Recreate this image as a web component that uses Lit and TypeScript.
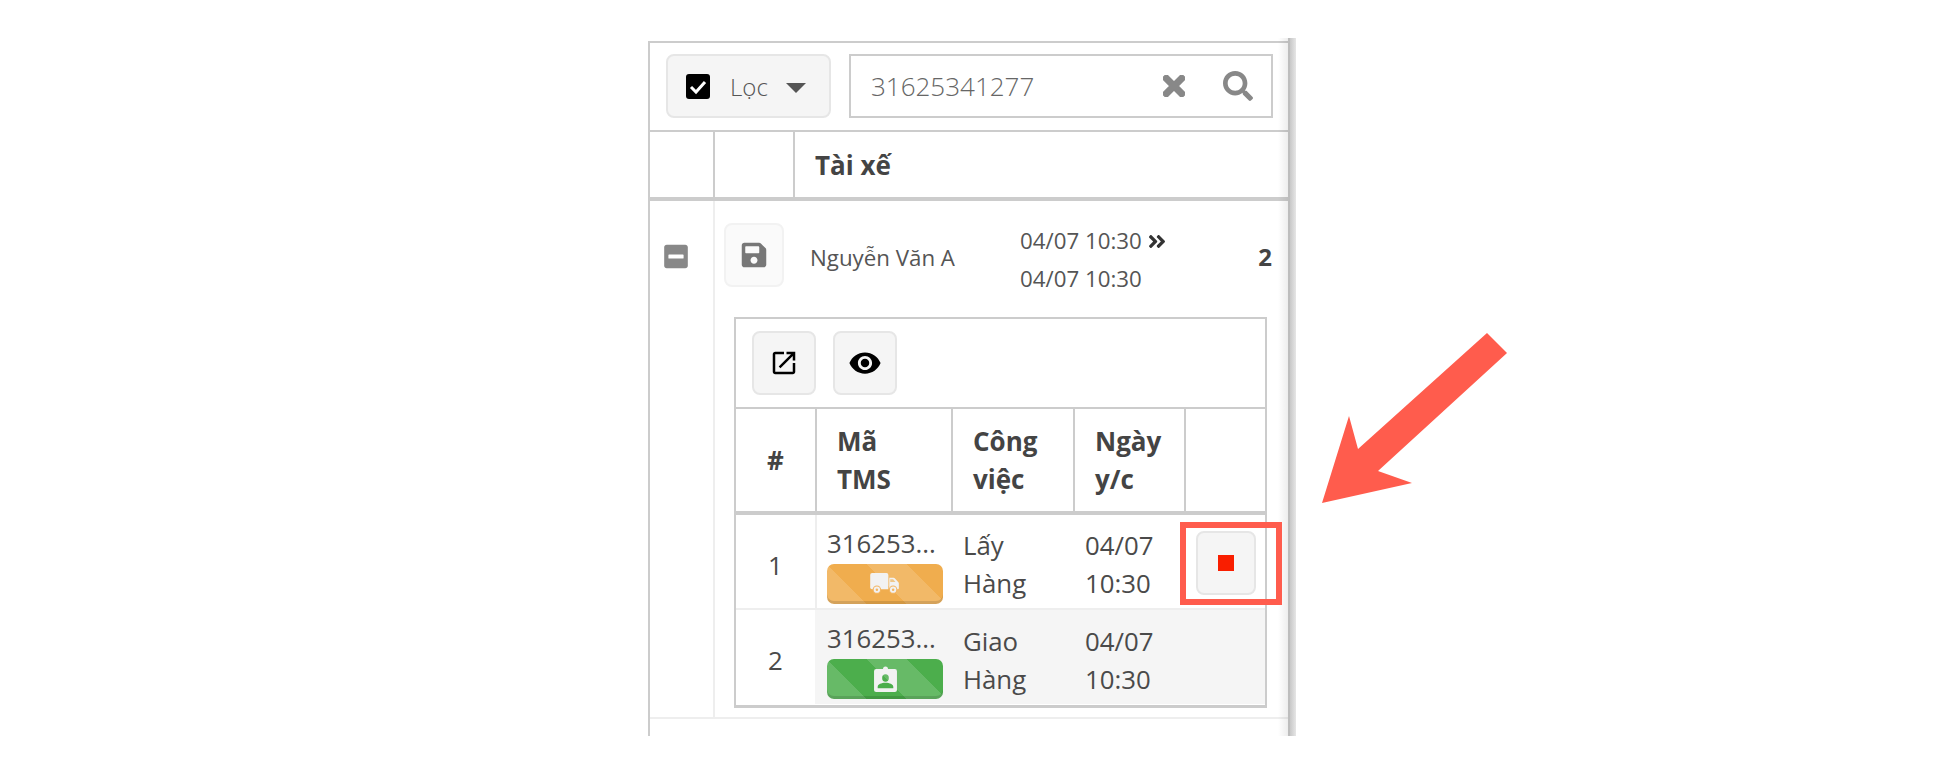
import { LitElement, html, css } from "lit";
import { customElement } from "lit/decorators.js";

const P = {
  times: "M242.72 256l100.07-100.07c12.28-12.28 12.28-32.19 0-44.48l-22.24-22.24c-12.28-12.28-32.19-12.28-44.48 0L176 189.28 75.93 89.21c-12.28-12.28-32.19-12.28-44.48 0L9.21 111.45c-12.28 12.28-12.28 32.19 0 44.48L109.28 256 9.21 356.07c-12.28 12.28-12.28 32.19 0 44.48l22.24 22.24c12.28 12.28 32.2 12.28 44.48 0L176 322.72l100.07 100.07c12.28 12.28 32.2 12.28 44.48 0l22.24-22.24c12.28-12.28 12.28-32.19 0-44.48L242.72 256z",
  search: "M505 442.7L405.3 343c-4.5-4.5-10.6-7-17-7H372c27.6-35.3 44-79.7 44-128C416 93.1 322.9 0 208 0S0 93.1 0 208s93.1 208 208 208c48.3 0 92.7-16.4 128-44v16.3c0 6.4 2.5 12.5 7 17l99.7 99.7c9.4 9.4 24.6 9.4 33.9 0l28.3-28.3c9.4-9.4 9.4-24.6.1-34zM208 336c-70.7 0-128-57.2-128-128 0-70.7 57.2-128 128-128 70.7 0 128 57.2 128 128 0 70.7-57.2 128-128 128z",
  save: "M433.941 129.941l-83.882-83.882A48 48 0 0 0 316.118 32H48C21.49 32 0 53.49 0 80v352c0 26.51 21.49 48 48 48h352c26.51 0 48-21.49 48-48V163.882a48 48 0 0 0-14.059-33.941zM224 416c-35.346 0-64-28.654-64-64 0-35.346 28.654-64 64-64s64 28.654 64 64c0 35.346-28.654 64-64 64zm96-304.52V212c0 6.627-5.373 12-12 12H76c-6.627 0-12-5.373-12-12V108c0-6.627 5.373-12 12-12h228.52c3.183 0 6.235 1.264 8.485 3.515l3.48 3.48A11.996 11.996 0 0 1 320 111.48z",
  minus: "M400 32H48C21.5 32 0 53.5 0 80v352c0 26.5 21.5 48 48 48h352c26.5 0 48-21.5 48-48V80c0-26.5-21.5-48-48-48zM92 296c-6.6 0-12-5.4-12-12v-56c0-6.6 5.4-12 12-12h264c6.6 0 12 5.4 12 12v56c0 6.6-5.4 12-12 12H92z",
  dbl: "M224.3 273l-136 136c-9.4 9.4-24.6 9.4-33.9 0l-22.6-22.6c-9.4-9.4-9.4-24.6 0-33.9l96.4-96.4-96.4-96.4c-9.4-9.4-9.4-24.6 0-33.9L54.3 103c9.4-9.4 24.6-9.4 33.9 0l136 136c9.5 9.4 9.5 24.6.1 34zm192-34l-136-136c-9.4-9.4-24.6-9.4-33.9 0l-22.6 22.6c-9.4 9.4-9.4 24.6 0 33.9l96.4 96.4-96.4 96.4c-9.4 9.4-9.4 24.6 0 33.9l22.6 22.6c9.4 9.4 24.6 9.4 33.9 0l136-136c9.4-9.2 9.4-24.4 0-33.8z",
  eye: "M12 4.5C7 4.5 2.73 7.61 1 12c1.73 4.39 6 7.5 11 7.5s9.27-3.11 11-7.5c-1.73-4.39-6-7.5-11-7.5zM12 17c-2.76 0-5-2.24-5-5s2.24-5 5-5 5 2.24 5 5-2.24 5-5 5zm0-8c-1.66 0-3 1.34-3 3s1.34 3 3 3 3-1.34 3-3-1.34-3-3-3z",
  open: "M19 19H5V5h7V3H5c-1.11 0-2 .9-2 2v14c0 1.1.89 2 2 2h14c1.1 0 2-.9 2-2v-7h-2v7zM14 3v2h3.59l-9.83 9.83 1.41 1.41L19 6.41V10h2V3h-7z",
  idb: "M3 3h6.600a2.400 2.400 0 0 1 4.800 0H21a2 2 0 0 1 2 2v18a2 2 0 0 1-2 2H3a2 2 0 0 1-2-2V5a2 2 0 0 1 2-2zM12 8a3.200 3.600 0 1 0 0 7.200a3.200 3.600 0 1 0 0-7.200zM4.500 21.500h15v-1.400c0-2.400-3.500-3.900-7.500-3.900s-7.500 1.500-7.500 3.900z",
  truckBody: "M2 0h15a2 2 0 0 1 2 2v15H2a2 2 0 0 1-2-2V2a2 2 0 0 1 2-2z",
  truckCab: "M20 5h4.500a1.500 1.500 0 0 1 1.200.6l4 4.400a1.500 1.500 0 0 1 .3 1v5a1 1 0 0 1-1 1h-9z",
};

@customElement("app-root")
export class AppRoot extends LitElement {
  static styles = css`
    :host { display: block; width: 1944px; height: 772px; overflow: hidden; background: #fff; position: relative;
      font-family: "Open Sans", sans-serif; color: #444; }
    .page { padding: 41px 0 0 648px; }
    .panel { width: 642px; height: 695px; box-sizing: border-box; overflow: hidden; border-top: 2px solid #ccc; border-left: 2px solid #ccc; }
    svg { display: block; fill: currentColor; }

    .toolbar { display: flex; gap: 18px; padding: 11px 17px 12px 16px; height: 64px; border-bottom: 2px solid #ccc; box-sizing: content-box; }
    .filter { width: 165px; height: 64px; box-sizing: border-box; display: flex; align-items: center; padding-left: 18px; background: #f5f5f5; border: 2px solid #e6e6e6; border-radius: 8px; font-size: 24px; font-weight: 300; color: #555; }
    .check { width: 24px; height: 25px; margin-right: 20px; color: #000; flex: none; }
    .caret { width: 0; height: 0; margin-left: 18px; margin-top: 3px; border-left: 10px solid transparent; border-right: 10px solid transparent; border-top: 10px solid #555; }
    .search { width: 424px; height: 64px; box-sizing: border-box; display: flex; align-items: center; border: 2px solid #ccc; padding: 0 18px 0 20px; font-size: 26px; color: #666; font-weight: 300; }
    .search .q { flex: 1; }
    .search .x { width: 22px; height: 22px; color: #888; margin-right: 38px; stroke: currentColor; stroke-width: 20; }
    .search .s { width: 30px; height: 30px; color: #888; }

    .head { display: grid; grid-template-columns: 63px 80px 1fr; height: 65px; border-bottom: 4px solid #ccc; font-size: 26px; font-weight: 700; }
    .head > div { border-left: 2px solid #ccc; display: flex; align-items: center; padding-left: 20px; }
    .head > div:first-child { border-left: 0; }

    .row { display: grid; grid-template-columns: 63px 1fr; border-bottom: 2px solid #eee; height: 518px; box-sizing: border-box; }
    .side { padding: 42px 0 0 14px; color: #888; }
    .side svg { width: 24px; height: 27px; }
    .main { border-left: 2px solid #eee; padding: 22px 18px 0 9px; }
    .driver { display: flex; align-items: center; height: 64px; margin-bottom: 30px; }
    .save { width: 60px; height: 64px; flex: none; box-sizing: border-box; background: #fafafa; border: 2px solid #f2f2f2; border-radius: 8px; display: flex; align-items: center; justify-content: center; color: #777; }
    .save svg { width: 26px; height: 28px; }
    .name { font-size: 22.300px; margin: 5px 0 0 26px; width: 210px; color: #555; white-space: nowrap; }
    .dates { font-size: 22.300px; line-height: 38px; margin-top: 10px; color: #555; }
    .dates .d { display: flex; align-items: center; gap: 6px; }
    .dates svg { width: 18px; height: 21px; color: #333; }
    .count { font-size: 24px; font-weight: 700; margin: 2px 0 0 auto; }

    .inner { margin-left: 10px; width: 533px; box-sizing: border-box; border: 2px solid #ccc; border-bottom-width: 3px; height: 391px; }
    .bar { display: flex; gap: 17px; padding: 12px 16px; height: 64px; border-bottom: 2px solid #ccc; box-sizing: content-box; }
    .btn { width: 64px; height: 64px; box-sizing: border-box; background: #f5f5f5; border: 2px solid #e6e6e6; border-radius: 8px; display: flex; align-items: center; justify-content: center; color: #000; }
    .btn .o { width: 30px; height: 30px; }
    .btn .e { width: 34px; height: 34px; }
    .cols { display: grid; grid-template-columns: 79px 136px 122px 111px 1fr; }
    .th { height: 102px; border-bottom: 4px solid #ccc; border-left: 2px solid #ccc; font-size: 26px; font-weight: 700; line-height: 38px; box-sizing: content-box; display: flex; align-items: center; padding-left: 20px; white-space: nowrap; }
    .th.c { justify-content: center; padding: 0; border-left: 0; }
    .td { height: 94px; font-size: 25.800px; line-height: 38px; color: #4a4a4a; display: flex; align-items: center; padding: 5px 0 0 12px; box-sizing: border-box; border-bottom: 2px solid #eee; }
    .first .td { height: 95px; }
    .td.n { justify-content: center; padding: 6px 0 0 0; border-right: 2px solid #eee; margin-right: -2px; }
    .shade .td:not(.n) { background: #f5f5f5; }
    .shade .td { border-bottom: 0; }
    .tms .code { line-height: 36px; height: 39px; display: block; white-space: nowrap; }
    .badge { width: 116px; height: 40px; border-radius: 7px; display: flex; align-items: center; justify-content: center; color: #f2f2f2; box-sizing: border-box;
      background-image: linear-gradient(45deg, rgba(255,255,255,.15) 25%, transparent 25%, transparent 50%, rgba(255,255,255,.15) 50%, rgba(255,255,255,.15) 75%, transparent 75%, transparent);
      background-size: 80px 80px; background-position: 40px 0; }
    .badge.o { background-color: #f0ad4e; box-shadow: inset 0 -3px 0 rgba(0,0,0,.12); }
    .badge.g { background-color: #4cae4c; box-shadow: inset 0 -3px 0 rgba(0,0,0,.12); }
    .badge .t { width: 30px; height: 21px; margin-top: -1px; }
    .badge .i { width: 25px; height: 29px; }
    .stop { width: 60px; height: 64px; box-sizing: border-box; margin-top: -3px; background: #f5f5f5; border: 2px solid #e6e6e6; border-radius: 8px; display: flex; align-items: center; justify-content: center; }
    .stop i { display: block; width: 16px; height: 16px; background: #f91e00; }
    .td.act { padding-left: 12px; }

    .edge { position: absolute; left: 1278px; top: 38px; width: 18px; height: 698px; pointer-events: none;
      background: linear-gradient(to right, rgba(0,0,0,0) 0, rgba(0,0,0,.07) 10px, #bdbdbd 10px, #bdbdbd 12px, #c8c8c8 12px, #e6e6e6 18px); }
    .mark { position: absolute; left: 1180px; top: 522px; width: 102px; height: 83px; box-sizing: border-box; border: 6px solid #ff5c4d; pointer-events: none; }
    .arrow { position: absolute; left: 0; top: 0; fill: #ff5c4d; pointer-events: none; }
  `;

  render() {
    return html`
      <div class="page"><div class="panel">
        <div class="toolbar">
          <div class="filter">
            <svg class="check" viewBox="0 0 24 25"><rect width="24" height="25" rx="3"></rect><path d="M5 13l5 5 9-10" fill="none" stroke="#fff" stroke-width="3"></path></svg>
            <span>Lọc</span><span class="caret"></span>
          </div>
          <div class="search">
            <span class="q">31625341277</span>
            <svg class="x" viewBox="0 80 352 352" preserveAspectRatio="none"><path d="${P.times}"></path></svg>
            <svg class="s" viewBox="0 0 512 512"><path d="${P.search}"></path></svg>
          </div>
        </div>
        <div class="head"><div></div><div></div><div>Tài xế</div></div>
        <div class="row">
          <div class="side"><svg viewBox="0 0 448 512"><path d="${P.minus}"></path></svg></div>
          <div class="main">
            <div class="driver">
              <div class="save"><svg viewBox="0 0 448 512"><path d="${P.save}"></path></svg></div>
              <div class="name">Nguyễn Văn A</div>
              <div class="dates">
                <div class="d">04/07 10:30 <svg viewBox="0 0 448 512"><path d="${P.dbl}"></path></svg></div>
                <div>04/07 10:30</div>
              </div>
              <div class="count">2</div>
            </div>
            <div class="inner">
              <div class="bar">
                <div class="btn"><svg class="o" viewBox="0 0 24 24"><path d="${P.open}"></path></svg></div>
                <div class="btn"><svg class="e" viewBox="0 0 24 24"><path d="${P.eye}"></path></svg></div>
              </div>
              <div class="cols">
                <div class="th c">#</div><div class="th">Mã<br />TMS</div><div class="th">Công<br />việc</div><div class="th">Ngày<br />y/c</div><div class="th"></div>
              </div>
              <div class="cols first">
                <div class="td n">1</div>
                <div class="td"><div class="tms"><span class="code">316253...</span><div class="badge o">
                  <svg class="t" viewBox="0 0 31 22">
                    <path d="${P.truckBody}"></path><path d="${P.truckCab}"></path>
                    <path d="M21 6.500h3l2.500 3h-5.500z" fill="#efc78a"></path>
                    <circle cx="7" cy="17.500" r="4.500" fill="#f3b562"></circle><circle cx="7" cy="17.500" r="3.300"></circle><circle cx="7" cy="17.500" r="1.300" fill="#f3b562"></circle>
                    <circle cx="24" cy="17.500" r="4.500" fill="#f3b562"></circle><circle cx="24" cy="17.500" r="3.300"></circle><circle cx="24" cy="17.500" r="1.300" fill="#f3b562"></circle>
                  </svg>
                </div></div></div>
                <div class="td">Lấy<br />Hàng</div>
                <div class="td">04/07<br />10:30</div>
                <div class="td act"><div class="stop"><i></i></div></div>
              </div>
              <div class="cols shade">
                <div class="td n">2</div>
                <div class="td"><div class="tms"><span class="code">316253...</span><div class="badge g"><svg class="i" viewBox="0 0 24 26"><path fill-rule="evenodd" d="${P.idb}"></path></svg></div></div></div>
                <div class="td">Giao<br />Hàng</div>
                <div class="td">04/07<br />10:30</div>
                <div class="td"></div>
              </div>
            </div>
          </div>
        </div>
      </div></div>
      <div class="edge"></div>
      <div class="mark"></div>
      <svg class="arrow" width="1944" height="772"><polygon points="1487,333 1507,353 1378,471 1412,483 1322,503 1349,416 1358,449"></polygon></svg>
    `;
  }
}
